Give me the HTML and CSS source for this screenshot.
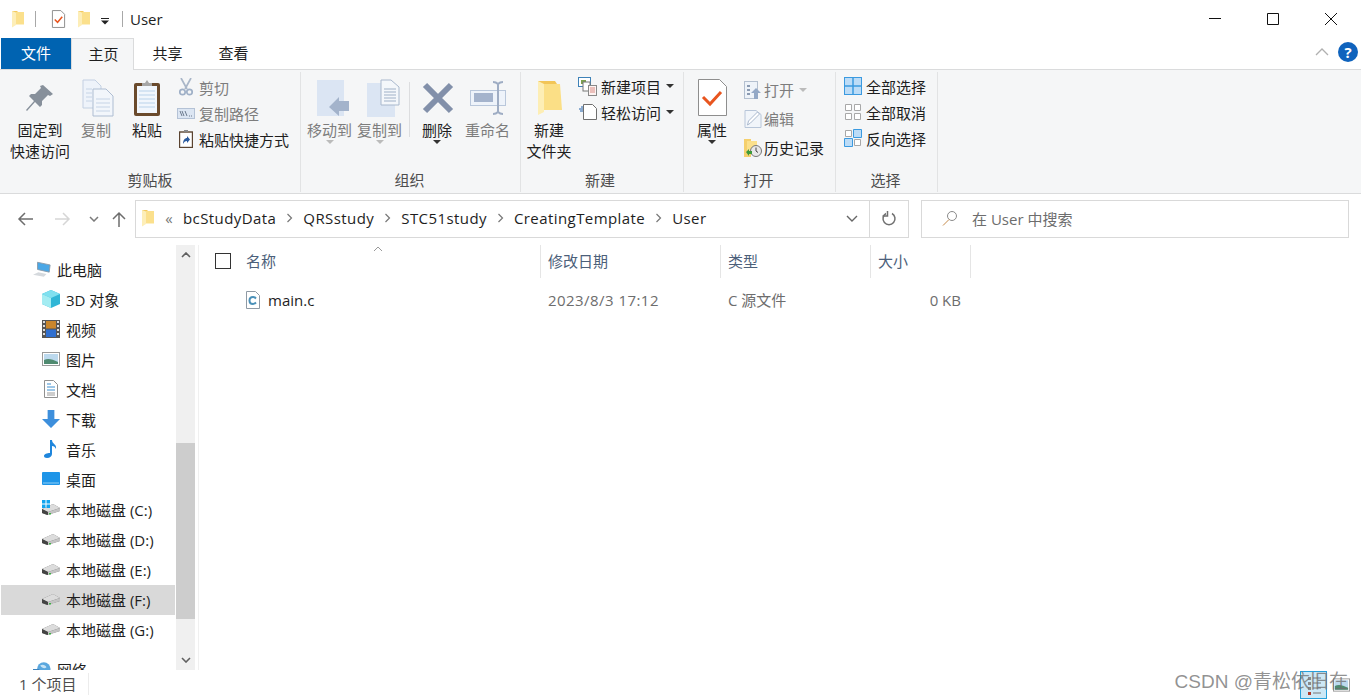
FILE: index.html
```html
<!DOCTYPE html>
<html lang="zh-CN">
<head>
    <meta charset="UTF-8">
    <title>User</title>
    <link rel="stylesheet" href="styles.css">
</head>
<body>
    <svg class="defs" aria-hidden="true">
        <symbol id="folder" viewBox="0 0 14 18">
            <path d="M1 1h5l1 1h6v12H5l-2 1-2 2z" fill="#f3c95f"/>
            <path d="M5 2h8v12.500H5z" fill="#fbe08c"/>
            <path d="M1 1l4 1.500v12.500l-4 2.500z" fill="#fdeeb8"/>
        </symbol>
        <symbol id="props-small" viewBox="0 0 16 19">
            <path d="M1.500.5h9l4 4v14h-13z" fill="#fff" stroke="#8a8a8a"/>
            <path d="M4 10l3 3 5-6" fill="none" stroke="#e8551f" stroke-width="1.600"/>
        </symbol>
        <symbol id="pin" viewBox="0 0 28 28">
            <path d="M17 1l10 9-3 2-2-1-6 6 0 4-2 2-5-5-8 9-1-1 8-9-5-5 2-2h4l6-6-1-2z" fill="#87909b"/>
        </symbol>
        <symbol id="copy" viewBox="0 0 32 38">
            <path d="M1 1h12l6 6v22H1z" fill="#eef3fa" stroke="#c3d0e2"/>
            <path d="M11 10h13l7 7v20H11z" fill="#f2f6fb" stroke="#aebdd2"/>
            <path d="M4 10h6M4 14h6M4 18h6M4 22h6M14 20h14M14 24h14M14 28h14M14 32h14" stroke="#c6d4e6"/>
        </symbol>
        <symbol id="paste" viewBox="0 0 28 38">
            <rect x="1" y="4" width="26" height="33" rx="2" fill="#6a4a2c"/>
            <rect x="4" y="7" width="20" height="27" fill="#f1f6fc"/>
            <path d="M6 12h16M6 16h16M6 20h16M6 24h16M6 28h16" stroke="#b9d2ea"/>
            <path d="M9 7V4h3l2-3 2 3h3v3z" fill="#a6a6a6"/>
        </symbol>
        <symbol id="scissors" viewBox="0 0 14 18">
            <path d="M2 0l6 11M12 0L6 11" stroke="#a9b6c8" stroke-width="1.700" fill="none"/>
            <circle cx="3.500" cy="14" r="2.700" fill="none" stroke="#9fb0c7" stroke-width="1.700"/>
            <circle cx="10.500" cy="14" r="2.700" fill="none" stroke="#9fb0c7" stroke-width="1.700"/>
        </symbol>
        <symbol id="copy-path" viewBox="0 0 18 11">
            <rect x=".5" y=".5" width="17" height="10" fill="#dce6f3" stroke="#b4c2d6"/>
            <path d="M3 3l2 5M5 3l2 5M8 3l2 5" stroke="#6c7a8e"/>
            <path d="M12 8h1M14 8h1" stroke="#6c7a8e"/>
        </symbol>
        <symbol id="paste-link" viewBox="0 0 14 18">
            <rect x=".5" y="2" width="13" height="15.500" fill="#fff" stroke="#5a4330" stroke-width="1.400"/>
            <path d="M5 2V0h4v2z" fill="#888"/>
            <path d="M4 14c0-4 2-6 4-6V6l3 3.500L8 13v-2c-2 0-3 1-4 3z" fill="#2a5a9e"/>
        </symbol>
        <symbol id="move" viewBox="0 0 33 36">
            <path d="M0 0h27v36H0z" fill="#dbe5f3"/>
            <path d="M12 27l10-10v4h10v10H22v5z" fill="#a3b3cb"/>
        </symbol>
        <symbol id="copy-to" viewBox="0 0 33 38">
            <path d="M0 4h28v34H0z" fill="#dbe5f3"/>
            <path d="M14 1h10l8 7v18H14z" fill="#f4f7fb" stroke="#a9b8cd"/>
            <path d="M17 10h12M17 13h12M17 16h12M17 19h12M17 22h12" stroke="#9fb0c7"/>
        </symbol>
        <symbol id="delete" viewBox="0 0 32 32">
            <path d="M3 3l26 26M29 3L3 29" stroke="#8290aa" stroke-width="6"/>
        </symbol>
        <symbol id="rename" viewBox="0 0 36 34">
            <rect x=".5" y="9.500" width="35" height="15" fill="#eef3fa" stroke="#b9c7db"/>
            <rect x="4" y="12" width="19" height="9" fill="#a4b3cc"/>
            <path d="M23 1c3 0 4 1 5 2 1-1 2-2 5-2M28 3v28M23 33c3 0 4-1 5-2 1 1 2 2 5 2" fill="none" stroke="#9fadc4" stroke-width="2"/>
        </symbol>
        <symbol id="folder-big" viewBox="0 0 25 36">
            <path d="M1 1h17l2 3v24l-15 0-4 3z" fill="#f2c557"/>
            <path d="M6 4h17l2 26H7z" fill="#fbdf86"/>
            <path d="M1 1l6 3v28l-6 3z" fill="#fdeeb5"/>
        </symbol>
        <symbol id="new-item" viewBox="0 0 19 19">
            <rect x=".5" y=".5" width="12" height="9" fill="#fff" stroke="#3e82b8"/>
            <rect x="3" y="3" width="5" height="4" fill="#7ea24e"/>
            <rect x="5" y="5" width="7" height="9" fill="#fff" stroke="#777"/>
            <rect x="10.500" y="8.500" width="8" height="10" fill="#fdf3f2" stroke="#888"/>
            <path d="M12 11h5M12 13h5M12 15h5" stroke="#d98b84"/>
        </symbol>
        <symbol id="easy" viewBox="0 0 18 16">
            <path d="M4.500.5h9l4 4v11h-13z" fill="#fff" stroke="#6f6f6f"/>
            <path d="M0 5h4M1 7h3M2 3h2" stroke="#1f5ea8"/>
        </symbol>
        <symbol id="props" viewBox="0 0 29 37">
            <path d="M.5.500h21l7 7v29H.5z" fill="#fff" stroke="#8e8e8e"/>
            <path d="M5 18l7 7 11-12" fill="none" stroke="#e8551f" stroke-width="3"/>
        </symbol>
        <symbol id="open" viewBox="0 0 18 18">
            <rect x=".5" y=".5" width="13" height="17" fill="#eef3f9" stroke="#b4c0d0"/>
            <path d="M3 4h3v2H3zM3 8h3v2H3zM3 12h3v2H3z" fill="#8b9bb2"/>
            <path d="M7 12l5-5 5 5h-3v6H10v-6z" fill="#93a8c6"/>
        </symbol>
        <symbol id="edit" viewBox="0 0 17 18">
            <path d="M.5.500h11l5 4v13H.5z" fill="#f1f5fa" stroke="#b8c6d9"/>
            <path d="M3 15l1-4 9-9 2 2-9 9z" fill="#fff" stroke="#aab9ce"/>
        </symbol>
        <symbol id="history" viewBox="0 0 18 18">
            <path d="M0 0h7v18H0z" fill="#f5d06d"/>
            <path d="M3 2h10v10H3z" fill="#fbe08c"/>
            <circle cx="12" cy="12" r="5.500" fill="#e8e8e8" stroke="#777"/>
            <path d="M12 8.500V12l2 1.500" fill="none" stroke="#444"/>
            <path d="M2 13l3-3v2h3v3H5v2z" fill="#3d9a3a"/>
        </symbol>
        <symbol id="select-all" viewBox="0 0 18 18">
            <rect x=".5" y=".5" width="17" height="17" fill="#bcdcf7" stroke="#3b9ae0"/>
            <path d="M9 0v18M0 9h18" stroke="#3b9ae0" stroke-width="1.500"/>
        </symbol>
        <symbol id="select-none" viewBox="0 0 18 18">
            <path d="M1.500 1.500h6v6h-6zM10.500 1.500h6v6h-6zM1.500 10.500h6v6h-6zM10.500 10.500h6v6h-6z" fill="#fff" stroke="#a8a8a8"/>
        </symbol>
        <symbol id="select-invert" viewBox="0 0 18 18">
            <path d="M1.500 1.500h6v6h-6zM10.500 10.500h6v6h-6z" fill="#fff" stroke="#a8a8a8"/>
            <path d="M9.500.5h8v8h-8zM.5 9.500h8v8h-8z" fill="#bcdcf7" stroke="#3b9ae0"/>
        </symbol>
        <symbol id="pc" viewBox="0 0 20 17">
            <path d="M5 1l14 3-1 8-13-3z" fill="#4aa7e6" stroke="#8a9aa8"/>
            <path d="M0 15l6-3 9 2-3 3z" fill="#d5d9dd"/>
        </symbol>
        <symbol id="cube" viewBox="0 0 18 18">
            <path d="M9 0l9 4v10l-9 4-9-4V4z" fill="#2fb6d6"/>
            <path d="M0 4l9 4 9-4-9-4z" fill="#7fe0ef"/>
            <path d="M0 4l9 4v10l-9-4z" fill="#a3ecf2"/>
        </symbol>
        <symbol id="video" viewBox="0 0 18 18">
            <rect width="18" height="18" fill="#555"/>
            <path d="M1 1h2v2H1zM1 5h2v2H1zM1 9h2v2H1zM1 13h2v2H1zM15 1h2v2h-2zM15 5h2v2h-2zM15 9h2v2h-2zM15 13h2v2h-2z" fill="#ddd"/>
            <rect x="4" y="1" width="10" height="7.500" fill="#c9862c"/>
            <rect x="4" y="9.500" width="10" height="7.500" fill="#2f6fd0"/>
        </symbol>
        <symbol id="picture" viewBox="0 0 18 14">
            <rect x=".5" y=".5" width="17" height="13" fill="#fff" stroke="#9a9a9a"/>
            <rect x="2" y="2" width="14" height="10" fill="#bcd9ee"/>
            <path d="M2 8c4-2 8-1 14 2v2H2z" fill="#4f8a70"/>
        </symbol>
        <symbol id="doc" viewBox="0 0 14 18">
            <path d="M.5.500h9l4 4v13H.5z" fill="#fff" stroke="#909090"/>
            <path d="M3 4h4M3 7h8M3 10h8" stroke="#3d8fd0"/>
            <path d="M3 13h8M3 15h8" stroke="#9a9a9a"/>
        </symbol>
        <symbol id="download" viewBox="0 0 16 16">
            <path d="M5 0h6v8h5l-8 8-8-8h5z" fill="#3d8fdc"/>
        </symbol>
        <symbol id="music" viewBox="0 0 14 18">
            <path d="M6 0h2c0 4 5 4 4 9-1-2-2-3-4-3v8c0 2-2 4-5 4-2 0-3-1-3-2 0-2 3-3 6-3z" fill="#1f86dc"/>
        </symbol>
        <symbol id="desktop" viewBox="0 0 18 14">
            <rect width="18" height="13" rx="1" fill="#1e95e8"/>
            <path d="M1 11h16" stroke="#8fd0f7"/>
        </symbol>
        <symbol id="drive" viewBox="0 0 18 12">
            <path d="M0 6l11-5 7 4v3L5 12 0 10z" fill="#6b6b6b"/>
            <path d="M0 6l11-5 7 4L6 9z" fill="#dcdcdc"/>
            <path d="M6 9l12-4v3L6 12z" fill="#c4c4c4"/>
            <path d="M0 6l6 3v3l-6-2z" fill="#444"/>
            <path d="M7 10h2v1.500H7z" fill="#3cb043"/>
        </symbol>
        <symbol id="windows" viewBox="0 0 8 8">
            <path d="M0 0h3.500v3.500H0zM4.500 0H8v3.500H4.500zM0 4.500h3.500V8H0zM4.500 4.500H8V8H4.500z" fill="#12a4ee"/>
        </symbol>
        <symbol id="globe" viewBox="0 0 20 16">
            <circle cx="12" cy="8" r="7.500" fill="#5aa7de"/>
            <path d="M8 4c3-2 6 0 7 2-2 2-5 1-7-2z" fill="#c7e3f5"/>
            <rect y="8" width="7" height="7" fill="#3d83bd"/>
        </symbol>
        <symbol id="c-file" viewBox="0 0 14 18">
            <path d="M.5.500h9l4 4v13H.5z" fill="#fff" stroke="#8f9aa5"/>
            <path d="M10 7.500C9 6.500 8 6 7 6 5 6 3.500 7.500 3.500 9.500S5 13 7 13c1 0 2-.5 3-1.500" fill="none" stroke="#4a90b8" stroke-width="2"/>
        </symbol>
        <symbol id="details-view" viewBox="0 0 14 22">
            <path d="M1 3h3v3H1zM1 8h3v3H1zM1 13h3v3H1z" fill="#8a8a8a"/>
            <path d="M1 18h3v3H1z" fill="#b03a2a"/>
            <path d="M6 4h8M6 9h8M6 14h8M6 19h8" stroke="#777"/>
        </symbol>
    </svg>

    <div class="window">
        <div class="titlebar">
            <svg class="ic qa-folder"><use href="#folder"/></svg>
            <span class="qa-sep"></span>
            <svg class="ic qa-check"><use href="#props-small"/></svg>
            <svg class="ic qa-folder2"><use href="#folder"/></svg>
            <svg class="qa-drop" viewBox="0 0 8 7"><path d="M0 0h8v1H0zM0 2.500h8L4 6.500z" fill="#222"/></svg>
            <span class="qa-sep qa-sep-last"></span>
            <span class="title">User</span>
            <div class="win-btns">
                <svg class="win-btn" viewBox="0 0 58 38"><path d="M23 18.500h12" stroke="#111"/></svg>
                <svg class="win-btn" viewBox="0 0 58 38"><path d="M23.500 13.500h11v11h-11z" fill="none" stroke="#111"/></svg>
                <svg class="win-btn" viewBox="0 0 58 38"><path d="M23 13l12 12M35 13L23 25" stroke="#111"/></svg>
            </div>
        </div>

        <div class="tabs">
            <div class="tab tab-file">文件</div>
            <div class="tab tab-active">主页</div>
            <div class="tab tab-plain">共享</div>
            <div class="tab tab-plain">查看</div>
            <div class="tabs-right">
                <svg class="collapse" viewBox="0 0 14 8"><path d="M1 7l6-6 6 6" fill="none" stroke="#b0b0b0" stroke-width="1.300"/></svg>
                <span class="help">?</span>
            </div>
        </div>

        <div class="ribbon">
            <section class="group group-clip">
                <div class="group-body">
                    <div class="big big-60"><div class="big-icon"><svg class="i-pin"><use href="#pin"/></svg></div><span>固定到<br>快速访问</span></div>
                    <div class="big big-52 off"><div class="big-icon"><svg class="i-copy"><use href="#copy"/></svg></div><span>复制</span></div>
                    <div class="big big-50"><div class="big-icon"><svg class="i-paste"><use href="#paste"/></svg></div><span>粘贴</span></div>
                    <div class="rows rows-clip">
                        <div class="row off"><span class="row-ic"><svg class="s14"><use href="#scissors"/></svg></span>剪切</div>
                        <div class="row off"><span class="row-ic"><svg class="s18x11"><use href="#copy-path"/></svg></span>复制路径</div>
                        <div class="row"><span class="row-ic"><svg class="s14"><use href="#paste-link"/></svg></span>粘贴快捷方式</div>
                    </div>
                </div>
                <div class="group-label">剪贴板</div>
            </section>

            <section class="group group-org">
                <div class="group-body">
                    <div class="big big-45 off"><div class="big-icon"><svg class="i-move"><use href="#move"/></svg></div><span>移动到</span><i class="caret caret-off"></i></div>
                    <div class="big big-45 off gap-5"><div class="big-icon"><svg class="i-move"><use href="#copy-to"/></svg></div><span>复制到</span><i class="caret caret-off"></i></div>
                    <div class="vsep"></div>
                    <div class="big big-50 gap-2"><div class="big-icon"><svg class="i-delete"><use href="#delete"/></svg></div><span>删除</span><i class="caret"></i></div>
                    <div class="big big-45 off gap-3"><div class="big-icon"><svg class="i-rename"><use href="#rename"/></svg></div><span>重命名</span></div>
                </div>
                <div class="group-label">组织</div>
            </section>

            <section class="group group-new">
                <div class="group-body">
                    <div class="big big-56"><div class="big-icon"><svg class="i-folder-big"><use href="#folder-big"/></svg></div><span>新建<br>文件夹</span></div>
                    <div class="rows rows-new">
                        <div class="row"><span class="row-ic row-ic-wide"><svg class="s19"><use href="#new-item"/></svg></span>新建项目<i class="caret caret-side"></i></div>
                        <div class="row"><span class="row-ic row-ic-wide"><svg class="s18x16"><use href="#easy"/></svg></span>轻松访问<i class="caret caret-side"></i></div>
                    </div>
                </div>
                <div class="group-label">新建</div>
            </section>

            <section class="group group-open">
                <div class="group-body">
                    <div class="big big-56"><div class="big-icon"><svg class="i-props"><use href="#props"/></svg></div><span>属性</span><i class="caret"></i></div>
                    <div class="rows rows-open">
                        <div class="row row-tall off"><span class="row-ic row-ic-narrow"><svg class="s18"><use href="#open"/></svg></span>打开<i class="caret caret-side caret-off"></i></div>
                        <div class="row row-tall off"><span class="row-ic row-ic-narrow"><svg class="s18"><use href="#edit"/></svg></span>编辑</div>
                        <div class="row row-tall"><span class="row-ic row-ic-narrow"><svg class="s18"><use href="#history"/></svg></span>历史记录</div>
                    </div>
                </div>
                <div class="group-label">打开</div>
            </section>

            <section class="group group-select">
                <div class="group-body">
                    <div class="rows rows-select">
                        <div class="row"><span class="row-ic"><svg class="s18"><use href="#select-all"/></svg></span>全部选择</div>
                        <div class="row"><span class="row-ic"><svg class="s18"><use href="#select-none"/></svg></span>全部取消</div>
                        <div class="row"><span class="row-ic"><svg class="s18"><use href="#select-invert"/></svg></span>反向选择</div>
                    </div>
                </div>
                <div class="group-label">选择</div>
            </section>
        </div>

        <div class="addressbar">
            <div class="nav">
                <svg class="nav-ic" viewBox="0 0 16 14"><path d="M16 7H2M8 1L2 7l6 6" fill="none" stroke="#6d6d6d" stroke-width="1.500"/></svg>
                <svg class="nav-ic" viewBox="0 0 16 14"><path d="M0 7h14M8 1l6 6-6 6" fill="none" stroke="#d6d6d6" stroke-width="1.500"/></svg>
                <svg class="nav-ic nav-small" viewBox="0 0 10 6"><path d="M1 1l4 4 4-4" fill="none" stroke="#7a7a7a" stroke-width="1.500"/></svg>
                <svg class="nav-ic" viewBox="0 0 14 16"><path d="M7 16V2M1 8l6-6 6 6" fill="none" stroke="#6d6d6d" stroke-width="1.500"/></svg>
            </div>
            <div class="address">
                <svg class="addr-folder"><use href="#folder"/></svg>
                <span class="addr-more">«</span>
                <span class="crumb">bcStudyData</span><svg class="crumb-sep" viewBox="0 0 27 10"><path d="M11.500 1l4 4-4 4" fill="none" stroke="#777" stroke-width="1.200"/></svg>
                <span class="crumb">QRSstudy</span><svg class="crumb-sep" viewBox="0 0 27 10"><path d="M11.500 1l4 4-4 4" fill="none" stroke="#777" stroke-width="1.200"/></svg>
                <span class="crumb">STC51study</span><svg class="crumb-sep" viewBox="0 0 27 10"><path d="M11.500 1l4 4-4 4" fill="none" stroke="#777" stroke-width="1.200"/></svg>
                <span class="crumb">CreatingTemplate</span><svg class="crumb-sep" viewBox="0 0 27 10"><path d="M11.500 1l4 4-4 4" fill="none" stroke="#777" stroke-width="1.200"/></svg>
                <span class="crumb">User</span>
                <svg class="addr-drop" viewBox="0 0 12 7"><path d="M1 1l5 5 5-5" fill="none" stroke="#666" stroke-width="1.400"/></svg>
                <div class="addr-refresh">
                    <svg viewBox="0 0 16 16"><path d="M5 2.500A6 6 0 1 0 11 2.500" fill="none" stroke="#707070" stroke-width="1.500"/><path d="M6.500 0v5H1.500" fill="none" stroke="#707070" stroke-width="1.500"/></svg>
                </div>
            </div>
            <div class="search">
                <svg class="search-ic" viewBox="0 0 16 16"><circle cx="10" cy="6" r="4.500" fill="none" stroke="#8a8a8a"/><path d="M7 9.500L1 15.500" stroke="#c58a4a"/></svg>
                <span>在 User 中搜索</span>
            </div>
        </div>

        <div class="main">
            <div class="sidebar">
                <div class="tree">
                    <div class="tree-row tree-top"><svg class="t-ic"><use href="#pc"/></svg>此电脑</div>
                    <div class="tree-row"><svg class="t-ic"><use href="#cube"/></svg>3D 对象</div>
                    <div class="tree-row"><svg class="t-ic"><use href="#video"/></svg>视频</div>
                    <div class="tree-row"><svg class="t-ic"><use href="#picture"/></svg>图片</div>
                    <div class="tree-row"><svg class="t-ic"><use href="#doc"/></svg>文档</div>
                    <div class="tree-row"><svg class="t-ic"><use href="#download"/></svg>下载</div>
                    <div class="tree-row"><svg class="t-ic"><use href="#music"/></svg>音乐</div>
                    <div class="tree-row"><svg class="t-ic"><use href="#desktop"/></svg>桌面</div>
                    <div class="tree-row"><span class="drive-c"><svg class="t-ic"><use href="#drive"/></svg><svg class="win-logo"><use href="#windows"/></svg></span>本地磁盘 (C:)</div>
                    <div class="tree-row"><svg class="t-ic"><use href="#drive"/></svg>本地磁盘 (D:)</div>
                    <div class="tree-row"><svg class="t-ic"><use href="#drive"/></svg>本地磁盘 (E:)</div>
                    <div class="tree-row tree-selected"><svg class="t-ic"><use href="#drive"/></svg>本地磁盘 (F:)</div>
                    <div class="tree-row"><svg class="t-ic"><use href="#drive"/></svg>本地磁盘 (G:)</div>
                    <div class="tree-row tree-top tree-network"><svg class="t-ic"><use href="#globe"/></svg>网络</div>
                </div>
                <div class="scrollbar">
                    <svg class="sb-arrow" viewBox="0 0 10 6"><path d="M1 5l4-4 4 4" fill="none" stroke="#606060" stroke-width="1.600"/></svg>
                    <div class="sb-track"><div class="sb-thumb"></div></div>
                    <svg class="sb-arrow" viewBox="0 0 10 6"><path d="M1 1l4 4 4-4" fill="none" stroke="#606060" stroke-width="1.600"/></svg>
                </div>
            </div>

            <div class="list">
                <div class="list-head">
                    <div class="head-cell head-name">
                        <span class="check"></span>名称
                        <svg class="sort" viewBox="0 0 10 5"><path d="M1 5l4-4 4 4" fill="none" stroke="#999"/></svg>
                    </div>
                    <div class="head-cell">修改日期</div>
                    <div class="head-cell">类型</div>
                    <div class="head-cell">大小</div>
                </div>
                <div class="list-row">
                    <div class="cell cell-name"><svg class="file-ic"><use href="#c-file"/></svg>main.c</div>
                    <div class="cell cell-date">2023/8/3 17:12</div>
                    <div class="cell cell-type">C 源文件</div>
                    <div class="cell cell-size">0 KB</div>
                </div>
            </div>
        </div>

        <div class="statusbar">
            <span class="status-text">1 个项目</span>
            <div class="views">
                <div class="view-btn view-on"><svg><use href="#details-view"/></svg></div>
                <svg class="view-pic"><use href="#picture"/></svg>
            </div>
        </div>

        <div class="watermark">CSDN @青松依旧在</div>
    </div>
</body>
</html>
```

FILE: styles.css
```css
* {
    box-sizing: border-box;
}
body {
    margin: 0;
    background: #fff;
    font-family: "Open Sans", "Noto Sans CJK SC", sans-serif;
    font-size: 15px;
    color: #1e1e1e;
    overflow: hidden;
}
svg {
    display: block;
    flex: none;
}
.defs {
    position: absolute;
    width: 0;
    height: 0;
}
.window {
    position: relative;
    width: 1361px;
    height: 700px;
    overflow: hidden;
}

/* title bar */
.titlebar {
    display: flex;
    align-items: center;
    height: 38px;
    padding-left: 11px;
}
.qa-folder {
    width: 14px;
    height: 18px;
}
.qa-sep {
    width: 1px;
    height: 16px;
    margin-left: 10px;
    background: #a8a8a8;
}
.qa-check {
    width: 15px;
    height: 18px;
    margin-left: 15px;
}
.qa-folder2 {
    width: 14px;
    height: 18px;
    margin-left: 11px;
}
.qa-drop {
    width: 8px;
    height: 7px;
    margin: 4px 0 0 10px;
}
.qa-sep-last {
    margin-left: 13px;
}
.title {
    margin-left: 7px;
    line-height: 20px;
}
.win-btns {
    display: flex;
    margin-left: auto;
    margin-right: 1px;
}
.win-btn {
    width: 58px;
    height: 38px;
}

/* tabs */
.tabs {
    display: flex;
    height: 32px;
    padding-left: 1px;
    border-bottom: 1px solid #dadbdc;
}
.tab {
    width: 65px;
    height: 32px;
    text-align: center;
    line-height: 31px;
}
.tab-plain {
    margin-left: 1px;
}
.tab-file {
    width: 70px;
    height: 31px;
    background: #0063b1;
    color: #fff;
}
.tab-active {
    width: 63px;
    padding-left: 2px;
    border: 1px solid #dadbdc;
    border-bottom: none;
    background: #f5f6f7;
    line-height: 30px;
}
.tabs-right {
    display: flex;
    align-items: center;
    margin-left: auto;
    padding: 0 3px 4px 0;
}
.collapse {
    width: 14px;
    height: 8px;
    margin-right: 9px;
}
.help {
    width: 20px;
    height: 20px;
    border-radius: 50%;
    background: #0f63bd;
    color: #fff;
    font-size: 15px;
    font-weight: 700;
    text-align: center;
    line-height: 20px;
}

/* ribbon */
.ribbon {
    display: flex;
    height: 124px;
    background: #f5f6f7;
    border-bottom: 1px solid #dadbdc;
}
.group {
    display: flex;
    flex-direction: column;
    height: 120px;
    margin-top: 2px;
    border-right: 1px solid #e2e3e4;
}
.group-clip {
    width: 301px;
    padding-left: 10px;
}
.group-org {
    width: 220px;
    padding-left: 6px;
}
.group-new {
    width: 163px;
}
.group-open {
    width: 152px;
}
.group-select {
    width: 102px;
    padding-left: 8px;
}
.group-body {
    display: flex;
    flex: 1;
    padding-top: 3px;
}
.group-label {
    height: 24px;
    padding-top: 2px;
    line-height: 21px;
    text-align: center;
    color: #4d4d4d;
    font-size: 15px;
}
.group-clip .group-label {
    margin-left: -10px;
}
.group-org .group-label {
    margin-left: -8px;
}
.group-new .group-label {
    margin-right: 4px;
}
.group-open .group-label {
    margin-right: 2px;
}
.group-select .group-label {
    margin-left: -10px;
}
.big {
    display: flex;
    flex-direction: column;
    align-items: center;
    text-align: center;
    line-height: 21px;
    white-space: nowrap;
}
.big-icon {
    display: flex;
    align-items: center;
    justify-content: center;
    height: 45px;
    flex: none;
}
.big-45 {
    width: 45px;
}
.big-50 {
    width: 50px;
}
.big-52 {
    width: 52px;
}
.big-56 {
    width: 56px;
}
.big-60 {
    width: 60px;
}
.gap-2 {
    margin-left: 2px;
}
.gap-3 {
    margin-left: 3px;
}
.gap-5 {
    margin-left: 5px;
}
.off {
    color: #7d7d7d;
}
.i-pin {
    width: 28px;
    height: 28px;
}
.i-copy {
    width: 32px;
    height: 38px;
    margin-left: 3px;
}
.i-paste {
    width: 28px;
    height: 38px;
}
.i-move {
    width: 33px;
    height: 38px;
    margin-left: 7px;
}
.i-delete {
    width: 32px;
    height: 32px;
    margin-left: 2px;
}
.i-rename {
    width: 36px;
    height: 34px;
}
.i-folder-big {
    width: 25px;
    height: 36px;
}
.i-props {
    width: 29px;
    height: 37px;
}
.caret {
    display: block;
    width: 0;
    height: 0;
    margin-top: -1px;
    border-left: 4px solid transparent;
    border-right: 4px solid transparent;
    border-top: 4px solid #333;
}
.caret-off {
    border-top-color: #bbb;
}
.caret-side {
    margin: 0 0 0 5px;
}
.vsep {
    width: 1px;
    height: 55px;
    margin: 7px 0 0 7px;
    background: #dcdddf;
}
.rows-clip {
    margin-left: 5px;
    margin-top: -1px;
}
.rows-new {
    margin-left: 1px;
    margin-top: -2px;
}
.rows-open {
    margin-left: 4px;
}
.rows-select {
    margin-top: -2px;
}
.row {
    display: flex;
    align-items: center;
    height: 26px;
    white-space: nowrap;
}
.row-tall {
    height: 29px;
}
.row-ic {
    display: flex;
    justify-content: center;
    width: 18px;
    margin-right: 4px;
}
.row-ic-wide {
    width: 19px;
}
.row-ic-narrow {
    width: 17px;
    margin-right: 3px;
}
.s14 {
    width: 14px;
    height: 18px;
}
.s18x11 {
    width: 18px;
    height: 11px;
}
.s18 {
    width: 18px;
    height: 18px;
}
.s19 {
    width: 19px;
    height: 19px;
}
.s18x16 {
    width: 18px;
    height: 16px;
}

/* address bar */
.addressbar {
    display: flex;
    height: 51px;
    padding-top: 6px;
}
.nav {
    display: grid;
    grid-template-columns: 50px 26px 36px 14px;
    align-items: center;
    justify-items: center;
    width: 135px;
    height: 38px;
}
.nav-ic {
    width: 16px;
    height: 16px;
}
.nav-small {
    width: 10px;
    height: 6px;
}
.address {
    display: flex;
    align-items: center;
    width: 774px;
    height: 38px;
    padding-left: 5px;
    padding-bottom: 2px;
    border: 1px solid #d9d9d9;
    line-height: 20px;
}
.addr-folder {
    width: 14px;
    height: 18px;
}
.addr-more {
    width: 28px;
    text-align: center;
    color: #777;
}
.crumb {
    white-space: nowrap;
    letter-spacing: 0.42px;
}
.crumb-sep {
    width: 27px;
    height: 10px;
}
.addr-drop {
    width: 12px;
    height: 7px;
    margin-left: auto;
    margin-right: 11px;
}
.addr-refresh {
    display: flex;
    align-items: center;
    justify-content: center;
    width: 39px;
    height: 36px;
    margin-bottom: -2px;
    border-left: 1px solid #d9d9d9;
}
.addr-refresh svg {
    width: 16px;
    height: 16px;
}
.search {
    display: flex;
    align-items: center;
    width: 428px;
    height: 38px;
    margin-left: 12px;
    padding-left: 20px;
    padding-bottom: 2px;
    border: 1px solid #d9d9d9;
    color: #6d6d6d;
}
.search-ic {
    width: 16px;
    height: 16px;
    margin-right: 14px;
}

/* main area */
.main {
    display: flex;
    height: 425px;
}
.sidebar {
    display: flex;
    width: 199px;
    border-right: 1px solid #f0f0f0;
}
.tree {
    width: 176px;
    height: 425px;
    overflow: hidden;
    padding: 10px 1px 0;
}
.tree-row {
    display: flex;
    align-items: center;
    height: 30px;
    padding-left: 41px;
    padding-bottom: 2px;
}
.tree-top {
    padding-left: 32px;
}
.tree-top .t-ic {
    margin-right: 6px;
}
.tree-network {
    margin-top: 10px;
}
.tree-selected {
    background: #d9d9d9;
}
.t-ic {
    width: 18px;
    height: 18px;
    margin-right: 6px;
}
.drive-c {
    position: relative;
    display: block;
}
.win-logo {
    position: absolute;
    top: 0;
    left: 0;
    width: 8px;
    height: 8px;
}
.scrollbar {
    display: flex;
    flex-direction: column;
    align-items: center;
    width: 19px;
    background: #f0f0f0;
}
.sb-arrow {
    width: 10px;
    height: 6px;
    margin: 7px 0;
}
.sb-track {
    flex: 1;
    width: 100%;
    margin-top: -3px;
    padding-top: 181px;
}
.sb-thumb {
    height: 176px;
    background: #cdcdcd;
}
.list {
    flex: 1;
}
.list-head,
.list-row {
    display: grid;
    grid-template-columns: 342px 180px 150px 100px;
    width: 772px;
}
.list-head {
    height: 33px;
}
.head-cell {
    display: flex;
    align-items: center;
    padding-left: 7px;
    padding-bottom: 2px;
    color: #4c607a;
    border-right: 1px solid #e5e5e5;
}
.head-name {
    position: relative;
    padding-left: 16px;
}
.check {
    width: 16px;
    height: 16px;
    margin-right: 15px;
    border: 1px solid #333;
    background: #fff;
}
.sort {
    position: absolute;
    top: 1px;
    left: 174px;
    width: 10px;
    height: 5px;
}
.list-row {
    height: 30px;
    margin-top: 7px;
}
.cell {
    display: flex;
    align-items: center;
    padding-left: 7px;
    color: #6d6d6d;
}
.cell-name {
    padding-left: 47px;
    color: #1e1e1e;
}
.cell-date {
    letter-spacing: 0.45px;
}
.cell-type {
    padding-bottom: 2px;
}
.cell-size {
    justify-content: flex-end;
    padding-right: 10px;
}
.file-ic {
    width: 14px;
    height: 18px;
    margin-right: 8px;
}

/* status bar */
.statusbar {
    display: flex;
    align-items: center;
    height: 30px;
    padding-left: 19px;
    padding-bottom: 2px;
}
.status-text {
    padding-right: 12px;
    border-right: 1px solid #ececec;
    color: #4d4d4d;
    line-height: 22px;
}
.views {
    display: flex;
    align-items: center;
    margin-left: auto;
    margin-right: 11px;
    margin-bottom: -2px;
}
.view-btn {
    display: flex;
    align-items: center;
    justify-content: center;
    width: 27px;
    height: 28px;
    margin-right: 6px;
}
.view-on {
    background: #cce8f6;
    border: 1px solid #26a0da;
}
.view-btn svg {
    width: 14px;
    height: 22px;
}
.view-pic {
    width: 17px;
    height: 14px;
}
.watermark {
    position: absolute;
    right: 13px;
    top: 670px;
    font-family: "Liberation Sans", "Noto Sans CJK SC", sans-serif;
    font-size: 19px;
    line-height: 24px;
    color: rgba(110, 110, 110, 0.75);
}
```
